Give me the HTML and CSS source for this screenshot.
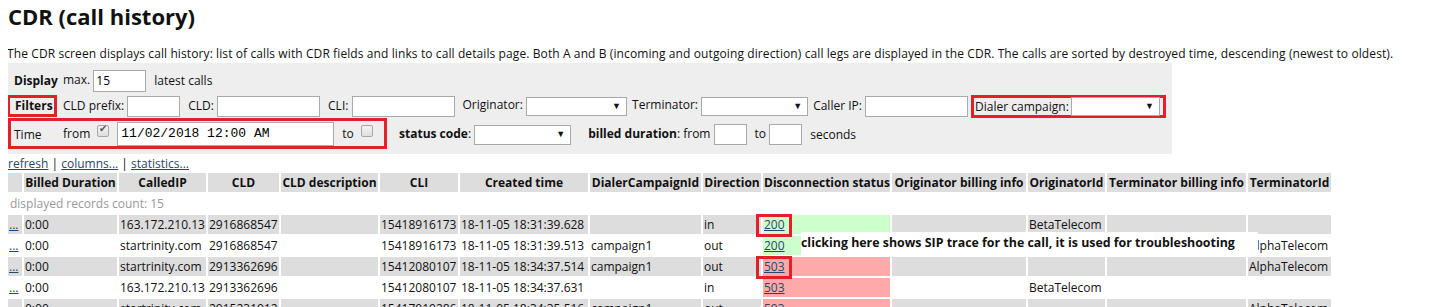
FILE: index.html
```html
<!DOCTYPE html>
<html lang="en">
<head>
    <meta charset="UTF-8">
    <title>CDR (call history)</title>
    <link rel="stylesheet" href="styles.css">
</head>
<body>

    <h1>CDR (call history)</h1>

    <p class="intro">The CDR screen displays call history: list of calls with CDR fields and links to call details page. Both A and B (incoming and outgoing direction) call legs are displayed in the CDR. The calls are sorted by destroyed time, descending (newest to oldest).</p>

    <div class="panel">
        <div class="row">
            <span class="row-title">Display</span>
            <label class="fld">max. <input type="text" class="w53" value="15"></label>
            <span>latest calls</span>
        </div>
        <div class="row">
            <span class="row-title mark">Filters</span>
            <label class="fld">CLD prefix: <input type="text" class="w53"></label>
            <label class="fld">CLD: <input type="text" class="w103"></label>
            <label class="fld">CLI: <input type="text" class="w103"></label>
            <label class="fld sel-fld">Originator: <span class="sel w101"><select></select></span></label>
            <label class="fld sel-fld">Terminator: <span class="sel w107"><select></select></span></label>
            <label class="fld ip-fld">Caller IP: <input type="text" class="w103"></label>
            <label class="fld mark dialer">Dialer campaign:<span class="sel w89"><select></select></span></label>
        </div>
        <div class="row">
            <span class="mark time-box">
                <span class="row-title plain">Time</span>
                <span>from</span>
                <input type="checkbox" class="chk" checked>
                <input type="text" class="date" value="11/02/2018 12:00 AM">
                <span>to</span>
                <input type="checkbox" class="chk">
            </span>
            <label class="fld status"><b>status code</b>: <span class="sel w97"><select></select></span></label>
            <span class="fld"><b>billed duration</b>: from <input type="text" class="w33"></span>
            <span class="fld">to <input type="text" class="w33"></span>
            <span>seconds</span>
        </div>
    </div>

    <div class="links">
        <a href="#">refresh</a> | <a href="#">columns...</a> | <a href="#">statistics...</a>
    </div>

    <div class="grid-wrap">
        <table class="cdr">
            <colgroup>
                <col style="width:14px">
                <col style="width:93px">
                <col style="width:87px">
                <col style="width:71px">
                <col style="width:97px">
                <col style="width:78px">
                <col style="width:128px">
                <col style="width:111px">
                <col style="width:58px">
                <col style="width:127px">
                <col style="width:134px">
                <col style="width:77px">
                <col style="width:139px">
                <col style="width:83px">
            </colgroup>
            <thead>
                <tr>
                    <th></th>
                    <th>Billed Duration</th>
                    <th>CalledIP</th>
                    <th>CLD</th>
                    <th>CLD description</th>
                    <th>CLI</th>
                    <th>Created time</th>
                    <th>DialerCampaignId</th>
                    <th>Direction</th>
                    <th>Disconnection status</th>
                    <th>Originator billing info</th>
                    <th>OriginatorId</th>
                    <th>Terminator billing info</th>
                    <th>TerminatorId</th>
                </tr>
            </thead>
            <tbody>
                <tr class="count"><td colspan="14">displayed records count: 15</td></tr>
                <tr class="odd">
                    <td><a href="#">...</a></td><td>0:00</td><td>163.172.210.13</td><td>2916868547</td><td></td><td>15418916173</td><td>18-11-05 18:31:39.628</td><td></td><td>in</td>
                    <td class="ok"><a href="#" class="boxed">200</a></td><td></td><td>BetaTelecom</td><td></td><td></td>
                </tr>
                <tr>
                    <td><a href="#">...</a></td><td>0:00</td><td>startrinity.com</td><td>2916868547</td><td></td><td>15418916173</td><td>18-11-05 18:31:39.513</td><td>campaign1</td><td>out</td>
                    <td class="ok"><a href="#">200</a></td><td></td><td></td><td></td><td>AlphaTelecom</td>
                </tr>
                <tr class="odd">
                    <td><a href="#">...</a></td><td>0:00</td><td>startrinity.com</td><td>2913362696</td><td></td><td>15412080107</td><td>18-11-05 18:34:37.514</td><td>campaign1</td><td>out</td>
                    <td class="fail"><a href="#" class="boxed">503</a></td><td></td><td></td><td></td><td>AlphaTelecom</td>
                </tr>
                <tr>
                    <td><a href="#">...</a></td><td>0:00</td><td>163.172.210.13</td><td>2913362696</td><td></td><td>15412080107</td><td>18-11-05 18:34:37.631</td><td></td><td>in</td>
                    <td class="fail"><a href="#">503</a></td><td></td><td>BetaTelecom</td><td></td><td></td>
                </tr>
                <tr class="odd">
                    <td><a href="#">...</a></td><td>0:00</td><td>startrinity.com</td><td>2915231912</td><td></td><td>15417919286</td><td>18-11-05 18:34:35.516</td><td>campaign1</td><td>out</td>
                    <td class="fail"><a href="#">503</a></td><td></td><td></td><td></td><td>AlphaTelecom</td>
                </tr>
            </tbody>
        </table>

        <div class="note">clicking here shows SIP trace for the call, it is used for troubleshooting</div>
    </div>

</body>
</html>
```

FILE: styles.css
```css
body {
    font-family: "Open Sans", "Noto Sans", sans-serif;
    font-size: 12px;
    color: #111;
    margin: 0 8px;
    overflow: hidden;
}
h1 {
    font-size: 22px;
    font-weight: bold;
    margin: 0;
    padding-top: 1px;
    line-height: 30px;
}
.intro {
    margin: 14px 0 0 -1px;
    line-height: 17px;
    white-space: nowrap;
    letter-spacing: 0.1px;
}
.panel {
    width: 1164px;
    background-color: #eeeeee;
    margin-top: 1px;
    padding: 5px 0 3px;
    box-sizing: border-box;
    height: 91px;
}
.row {
    display: flex;
    align-items: center;
    white-space: nowrap;
}
.row:nth-child(1) {
    height: 25px;
}
.row:nth-child(2) {
    height: 24px;
    margin-top: 1px;
}
.row:nth-child(3) {
    height: 31px;
    margin-top: 1px;
}
.row-title {
    font-weight: bold;
    width: 49px;
    padding-left: 6px;
    flex-shrink: 0;
}
.row-title.plain {
    font-weight: normal;
}
.mark {
    border: 3px solid #e3202a;
    box-sizing: border-box;
}
.row-title.mark {
    width: 50px;
    height: 22px;
    line-height: 16px;
    padding-left: 5px;
    margin-left: -1px;
    margin-right: 6px;
}
.fld {
    margin-right: 8px;
}
.sel-fld {
    margin-right: 5px;
}
.ip-fld {
    margin-right: 3px;
}
input[type="text"] {
    font-family: "Open Sans", sans-serif;
    font-size: 12px;
    height: 21px;
    border: 1px solid #a9a9a9;
    background: white;
    box-sizing: border-box;
    padding: 0 2px;
    vertical-align: middle;
    margin: 0;
}
.w53 { width: 53px; }
.w103 { width: 103px; }
.w33 { width: 33px; }
.row:nth-child(1) input { height: 22px; }
.sel {
    position: relative;
    display: inline-block;
    vertical-align: middle;
}
.sel select {
    appearance: none;
    -webkit-appearance: none;
    width: 100%;
    height: 19px;
    border: 1px solid #a9a9a9;
    background: white;
    display: block;
    margin: 0;
}
.sel::after {
    content: "▼";
    position: absolute;
    right: 6px;
    top: 3px;
    font-size: 9px;
    line-height: 12px;
    color: #111;
    pointer-events: none;
}
.w101 { width: 101px; }
.w107 { width: 107px; }
.w89 { width: 89px; }
.w97 { width: 97px; }
.w97 select { height: 20px; }
.dialer {
    display: flex;
    align-items: center;
    height: 23px;
    padding-left: 1px;
    margin: 0;
    width: 195px;
}
.dialer .sel {
    margin-left: 2px;
}
.time-box {
    display: flex;
    align-items: center;
    width: 379px;
    height: 31px;
    margin-right: 12px;
    margin-top: -2px;
}
.time-box .row-title {
    width: 49px;
    padding-left: 3px;
    padding-top: 2px;
}
.chk {
    appearance: none;
    -webkit-appearance: none;
    width: 12px;
    height: 12px;
    border: 1px solid #a8a8a8;
    border-radius: 2px;
    background: linear-gradient(#f4f4f4, #dedede);
    margin: 4px 0 0 7px;
    position: relative;
    align-self: flex-start;
}
.chk:checked::after {
    content: "✔";
    position: absolute;
    left: 1px;
    top: -3px;
    font-size: 10px;
    color: #555;
}
.date {
    font-family: "Liberation Mono", monospace !important;
    font-size: 13px !important;
    width: 217px;
    height: 24px !important;
    margin-left: 8px !important;
    margin-right: 8px !important;
    padding-left: 3px !important;
}
.status {
    margin-right: 17px;
}
.links {
    margin-top: 2px;
    height: 15px;
    line-height: 15px;
}
a {
    color: #26476b;
}
.grid-wrap {
    position: relative;
}
.cdr {
    table-layout: fixed;
    border-spacing: 2px;
    margin-left: -2px;
    width: 1327px;
}
.cdr th,
.cdr td {
    height: 19px;
    padding: 0 1px;
    box-sizing: border-box;
    white-space: nowrap;
    overflow: hidden;
    line-height: 19px;
}
.cdr th {
    background-color: #dddddd;
    font-weight: bold;
    text-align: center;
}
.cdr td {
    text-align: left;
}
.cdr .count td {
    color: #999;
    padding-left: 2px;
}
.cdr .odd td {
    background-color: #dddddd;
}
.cdr td.ok,
.cdr .odd td.ok {
    background-color: #ccffcc;
}
.cdr td.fail,
.cdr .odd td.fail {
    background-color: #ffaaaa;
}
.boxed {
    position: relative;
}
.boxed::after {
    content: "";
    position: absolute;
    left: -8px;
    right: -7px;
    top: -2px;
    bottom: -4px;
    border: 3px solid #e3202a;
}
.cdr td:has(.boxed) {
    overflow: visible;
}
.note {
    position: absolute;
    left: 793px;
    top: 61px;
    width: 457px;
    height: 23px;
    background: white;
    font-weight: bold;
    font-size: 12.4px;
    line-height: 21px;
    white-space: nowrap;
}
```
